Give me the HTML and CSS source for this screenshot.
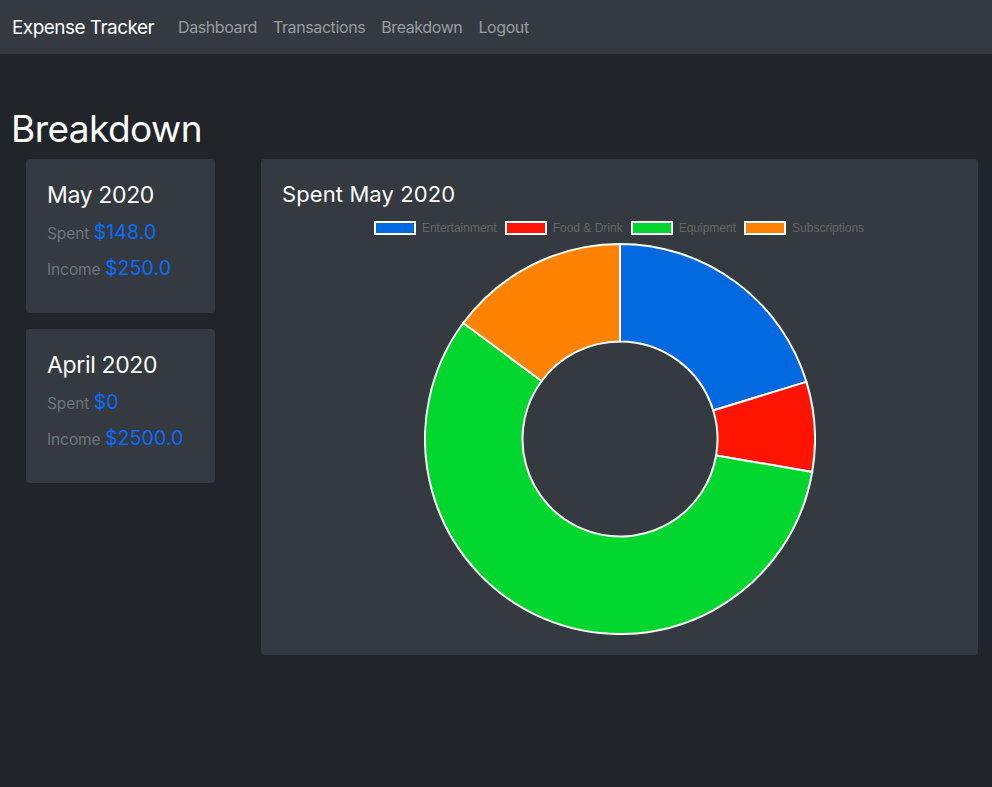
FILE: index.html
```html
<!DOCTYPE html>
<html lang="en">
<head>
<meta charset="utf-8">
<title>Expense Tracker - Breakdown</title>
<link rel="stylesheet" href="styles.css">
</head>
<body>
<nav class="navbar">
  <a class="brand" href="#">Expense Tracker</a>
  <ul class="nav">
    <li><a href="#">Dashboard</a></li>
    <li><a href="#">Transactions</a></li>
    <li><a href="#">Breakdown</a></li>
    <li><a href="#">Logout</a></li>
  </ul>
</nav>
<main class="page">
  <h1 class="page-title">Breakdown</h1>
  <div class="row">
    <div class="months">
      <div class="card month">
        <h4 class="month-title">May 2020</h4>
        <div class="stat"><span class="label">Spent</span> <span class="amount">$148.0</span></div>
        <div class="stat"><span class="label">Income</span> <span class="amount">$250.0</span></div>
      </div>
      <div class="card month">
        <h4 class="month-title">April 2020</h4>
        <div class="stat"><span class="label">Spent</span> <span class="amount">$0</span></div>
        <div class="stat"><span class="label">Income</span> <span class="amount">$2500.0</span></div>
      </div>
    </div>
    <div class="card chart-card">
      <h5 class="chart-title">Spent May 2020</h5>
      <ul class="legend">
        <li><span class="swatch sw-blue"></span>Entertainment</li>
        <li><span class="swatch sw-red"></span>Food &amp; Drink</li>
        <li><span class="swatch sw-green"></span>Equipment</li>
        <li><span class="swatch sw-orange"></span>Subscriptions</li>
      </ul>
      <svg class="donut" width="392" height="392" viewBox="-196 -196 392 392">
        <path class="seg-blue" d="M0,-195 A195,195 0 0 1 186.46,-57.12 L93.23,-28.56 A97.5,97.5 0 0 0 0,-97.5 Z"/>
        <path class="seg-red" d="M186.46,-57.12 A195,195 0 0 1 192.19,32.96 L96.10,16.48 A97.5,97.5 0 0 0 93.23,-28.56 Z"/>
        <path class="seg-green" d="M192.19,32.96 A195,195 0 1 1 -156.76,-115.97 L-78.38,-57.98 A97.5,97.5 0 1 0 96.10,16.48 Z"/>
        <path class="seg-orange" d="M-156.76,-115.97 A195,195 0 0 1 0,-195 L0,-97.5 A97.5,97.5 0 0 0 -78.38,-57.98 Z"/>
      </svg>
    </div>
  </div>
</main>
</body>
</html>
```
FILE: styles.css
```css
* { box-sizing: border-box; }
html, body { margin: 0; padding: 0; }
body {
  background: #212529;
  color: #fff;
  font-family: Inter, "Liberation Sans", sans-serif;
  font-size: 16px;
  min-height: 787px;
}
a { text-decoration: none; }

.navbar {
  height: 54px;
  background: #343a40;
  display: flex;
  align-items: center;
  padding: 0 12px;
}
.brand {
  color: #fff;
  font-size: 19px;
  letter-spacing: -0.55px;
  margin-right: 16px;
}
.nav {
  list-style: none;
  margin: 0;
  padding: 0;
  display: flex;
}
.nav a {
  display: block;
  padding: 0 8px;
  color: #9a9da0;
  font-size: 16px;
  letter-spacing: -0.4px;
}

.page { padding: 0 14px 0 11px; }
.page-title {
  margin: 0 0 4px;
  padding-top: 49px;
  font-size: 37px;
  font-weight: 400;
  letter-spacing: -0.55px;
  line-height: 52px;
}
.row {
  display: flex;
  align-items: flex-start;
}
.months {
  width: 189px;
  margin-left: 15px;
  display: flex;
  flex-direction: column;
  gap: 16px;
}
.card {
  background: #343a40;
  border-radius: 4px;
  padding: 20px;
}
.month { height: 154px; padding: 20px 21px; }
.month-title {
  margin: 0 0 3px;
  font-size: 23px;
  font-weight: 400;
  letter-spacing: -0.35px;
  line-height: 32px;
}
.stat {
  height: 36px;
  line-height: 36px;
  white-space: nowrap;
}
.label { color: #6c757d; font-size: 15.5px; letter-spacing: -0.1px; }
.amount { color: #0a6cff; font-size: 19.5px; letter-spacing: 0.1px; }

.chart-card {
  margin-left: 46px;
  flex: 1;
  display: flex;
  flex-direction: column;
  align-items: center;
}
.chart-title {
  align-self: stretch;
  margin: 3px 0 9px;
  font-size: 22px;
  font-weight: 400;
  letter-spacing: 0.1px;
  line-height: 25px;
  padding-left: 1px;
}
.legend {
  list-style: none;
  margin: 0 0 3px;
  padding: 0;
  height: 24px;
  display: flex;
  align-items: center;
  gap: 8px;
  font-family: "Liberation Sans", Arial, sans-serif;
  font-size: 12px;
  color: #666;
  margin-left: -1px;
}
.legend li { display: flex; align-items: center; }
.swatch {
  width: 42px;
  height: 14px;
  border: 2px solid #fff;
  margin-right: 6px;
}
.sw-blue { background: #0069df; }
.sw-red { background: #ff1400; }
.sw-green { background: #00d62d; }
.sw-orange { background: #ff8200; }

.donut { display: block; }
.donut path { stroke: #fff; stroke-width: 2; stroke-linejoin: round; }
.seg-blue { fill: #0069df; }
.seg-red { fill: #ff1400; }
.seg-green { fill: #00d62d; }
.seg-orange { fill: #ff8200; }
```
